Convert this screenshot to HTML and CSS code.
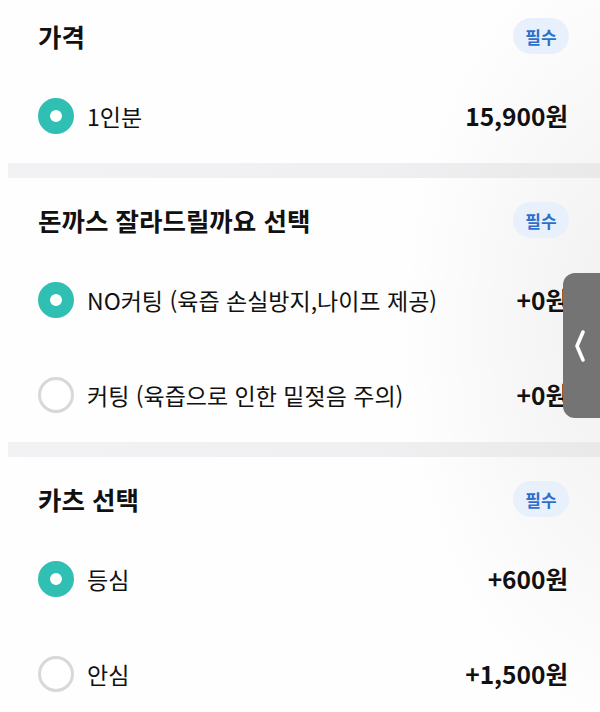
FILE: index.html
```html
<!DOCTYPE html>
<html lang="ko">
<head>
<meta charset="utf-8">
<link rel="stylesheet" href="styles.css">
</head>
<body>
<div class="page">
  <section class="group group--first">
    <div class="group-head">
      <h2 class="group-title">가격</h2>
      <span class="badge">필수</span>
    </div>
    <ul class="options">
      <li class="option">
        <span class="radio radio--on"></span>
        <span class="option-label">1인분</span>
        <span class="option-price">15,900원</span>
      </li>
    </ul>
  </section>
  <div class="divider"></div>
  <section class="group">
    <div class="group-head">
      <h2 class="group-title">돈까스 잘라드릴까요 선택</h2>
      <span class="badge">필수</span>
    </div>
    <ul class="options">
      <li class="option">
        <span class="radio radio--on"></span>
        <span class="option-label">NO커팅 (육즙 손실방지,나이프 제공)</span>
        <span class="option-price">+0원</span>
      </li>
      <li class="option">
        <span class="radio"></span>
        <span class="option-label">커팅 (육즙으로 인한 밑젖음 주의)</span>
        <span class="option-price">+0원</span>
      </li>
    </ul>
  </section>
  <div class="divider"></div>
  <section class="group">
    <div class="group-head">
      <h2 class="group-title">카츠 선택</h2>
      <span class="badge">필수</span>
    </div>
    <ul class="options">
      <li class="option">
        <span class="radio radio--on"></span>
        <span class="option-label">등심</span>
        <span class="option-price">+600원</span>
      </li>
      <li class="option">
        <span class="radio"></span>
        <span class="option-label">안심</span>
        <span class="option-price">+1,500원</span>
      </li>
    </ul>
  </section>
  <div class="side-tab">
    <svg class="side-tab-icon" viewBox="0 0 12 34" width="12" height="34">
      <path d="M9 3 L3 17 L9 31" fill="none" stroke="#fff" stroke-width="3.6" stroke-linecap="round" stroke-linejoin="round"/>
    </svg>
  </div>
</div>
</body>
</html>
```

FILE: styles.css
```css
* { box-sizing: border-box; }
html, body { margin: 0; padding: 0; }
body {
  font-family: "Noto Sans CJK KR", "Noto Sans", "Liberation Sans", sans-serif;
  color: #111;
  background: #fff;
}
.page {
  position: relative;
  width: 600px;
  height: 712px;
  overflow: hidden;
  background:
    radial-gradient(ellipse 240px 400px at 640px 330px, rgba(0,0,0,0.06), rgba(0,0,0,0) 100%),
    #fefefe;
}
.group {
  padding: 24px 32px 0 38px;
}
.group--first {
  padding-top: 18px;
}
.group-head {
  display: flex;
  align-items: center;
  justify-content: space-between;
  height: 36px;
}
.group-title {
  margin: 0;
  font-size: 25.5px;
  font-weight: 700;
  line-height: 36px;
}
.badge {
  display: flex;
  align-items: center;
  justify-content: center;
  width: 56px;
  height: 36px;
  border-radius: 18px;
  background: #e8f1fb;
  color: #2d6fcf;
  font-size: 17px;
  font-weight: 700;
  margin-right: -1px;
}
.options {
  list-style: none;
  margin: 14px 0 0;
  padding: 0;
}
.option {
  display: flex;
  align-items: center;
  height: 95px;
}
.radio {
  flex: 0 0 36px;
  width: 36px;
  height: 36px;
  border-radius: 50%;
  border: 3px solid #d8d8d8;
  background: #fff;
}
.radio--on {
  border: 12px solid #2fbfb3;
  background: #fff;
}
.option-label {
  margin-left: 13px;
  font-size: 23px;
  font-weight: 400;
  flex: 1 1 auto;
  white-space: nowrap;
}
.option-price {
  font-size: 24.5px;
  font-weight: 700;
  white-space: nowrap;
}
.divider {
  height: 15px;
  margin-left: 8px;
  background: linear-gradient(90deg, #f2f2f5 0%, #f0f0f2 60%, #e9e9ea 100%);
}
.side-tab {
  position: absolute;
  left: 563px;
  top: 273px;
  width: 40px;
  height: 145px;
  border-radius: 12px 0 0 12px;
  background: #747474;
  display: flex;
  align-items: center;
  justify-content: flex-start;
  padding-left: 11px;
}
.side-tab-icon {
  display: block;
}
```
